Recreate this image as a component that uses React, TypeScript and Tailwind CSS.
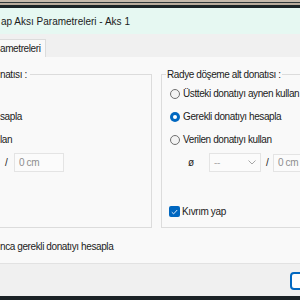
import React from "react";

const Radio = ({ checked }: { checked?: boolean }) =>
  checked ? (
    <span className="flex h-[10px] w-[10px] shrink-0 items-center justify-center rounded-full bg-[#0067c0]">
      <span className="h-[4px] w-[4px] rounded-full bg-white" />
    </span>
  ) : (
    <span className="h-[10px] w-[10px] shrink-0 rounded-full border border-[#707070] bg-[#f3f3f3]" />
  );

const Check = () => (
  <span className="flex h-[11px] w-[11px] shrink-0 items-center justify-center rounded-[2px] bg-[#0067c0]">
    <svg width="7" height="6" viewBox="0 0 7 6" fill="none">
      <path d="M0.8 3.2 2.6 4.9 6.2 1" stroke="#dbe9f7" strokeWidth="1" />
    </svg>
  </span>
);

const Field = ({ className }: { className: string }) => (
  <div className={`flex shrink-0 items-center border border-[#e4e4e4] bg-[#fbfbfb] pl-[4px] text-[#8e8e8e] ${className}`}>
    0 cm
  </div>
);

export default function App() {
  return (
    <div className="flex h-[300px] w-[300px] flex-col overflow-hidden bg-[#f0f0f0] font-['Liberation_Sans',sans-serif] text-[10px] text-[#1b1b1b]">
      {/* desktop edge above the window */}
      <div className="h-[2px] shrink-0 bg-[#c6b9ab]" />
      <div className="h-[1px] shrink-0 bg-[#30383a]" />
      <div className="h-[2px] shrink-0 bg-[#b9ab9c]" />
      <div className="h-[3px] shrink-0 bg-[#1b2427]" />

      <div className="flex h-[26px] shrink-0 items-center bg-[#e6f8f2] pl-[1px]">
        ap Aksı Parametreleri - Aks 1
      </div>

      <div className="flex h-[23px] shrink-0 items-end tracking-[-0.4px]">
        <div className="flex h-[18px] w-[46px] items-center border-r border-t border-[#dcdcdc] bg-[#f9f9f9]">
          ametreleri
        </div>
      </div>

      <div className="flex h-[207px] shrink-0 flex-col border-b border-[#e2e2e2] bg-[#f9f9f9] pt-[10px] tracking-[-0.4px]">
        <div className="flex">
          <fieldset className="h-[161px] w-[152px] shrink-0 border-y border-r border-[#dcdcdc]">
            <legend className="pr-[3px]">natısı :</legend>
            <div className="h-[23px]" />
            <div className="flex h-[23px] items-center">sapla</div>
            <div className="flex h-[23px] items-center">lan</div>
            <div className="flex h-[23px] items-center">
              <span className="ml-[5px] w-[9px]">/</span>
              <Field className="h-[19px] w-[50px]" />
            </div>
          </fieldset>

          <fieldset className="ml-[9px] h-[161px] w-[250px] shrink-0 border border-[#dcdcdc] pl-[4px]">
            <legend className="px-[1px]">Radye döşeme alt donatısı :</legend>
            <div className="pl-[4px]">
              <div className="flex h-[23px] items-center gap-[3px]">
                <Radio />
                <span>Üstteki donatıyı aynen kullan</span>
              </div>
              <div className="flex h-[23px] items-center gap-[3px]">
                <Radio checked />
                <span>Gerekli donatıyı hesapla</span>
              </div>
              <div className="flex h-[23px] items-center gap-[3px]">
                <Radio />
                <span>Verilen donatıyı kullan</span>
              </div>
              <div className="flex h-[23px] items-center">
                <span className="ml-[18px] w-[21px]">ø</span>
                <div className="flex h-[19px] w-[52px] shrink-0 items-center justify-between border border-[#e4e4e4] bg-[#fbfbfb] px-[4px] text-[#ababab]">
                  <span>--</span>
                  <svg width="8" height="5" viewBox="0 0 8 5" fill="none">
                    <path d="M0.5 0.5 4 4 7.5 0.5" stroke="#a6a6a6" strokeWidth="1" />
                  </svg>
                </div>
                <span className="ml-[5px] w-[7px]">/</span>
                <Field className="h-[18px] w-[60px]" />
              </div>
              <div className="-ml-[1px] mt-[26px] flex h-[23px] items-center gap-[2px]">
                <Check />
                <span>Kıvrım yap</span>
              </div>
            </div>
          </fieldset>
        </div>

        <div className="mt-[9px] flex h-[18px] items-center">nca gerekli donatıyı hesapla</div>
      </div>

      <div className="flex h-[32px] shrink-0 justify-end pt-[8px]">
        <button className="-mr-[60px] h-[18px] w-[70px] shrink-0 rounded-[4px] border-2 border-[#0067c0] bg-[#fdfdfd]" />
      </div>

      <div className="h-[4px] shrink-0 bg-[#1b2226]" />
    </div>
  );
}
